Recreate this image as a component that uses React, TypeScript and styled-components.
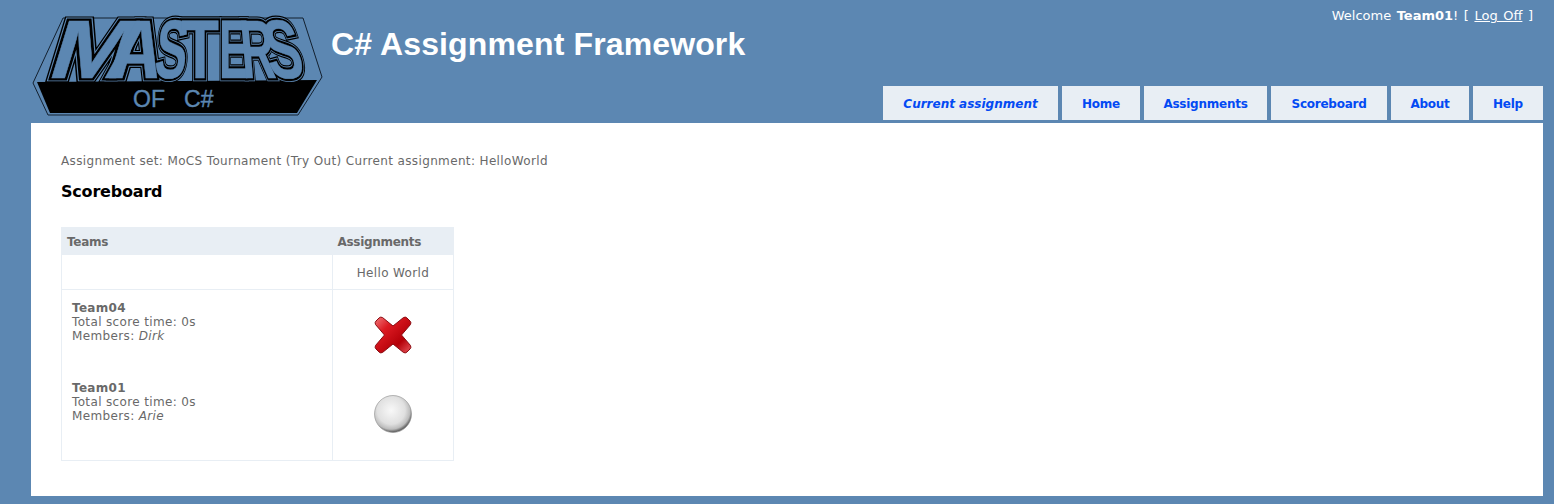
import styled, { createGlobalStyle } from "styled-components";

const GlobalStyle = createGlobalStyle`
  html, body {
    margin: 0;
    padding: 0;
    background-color: #5c87b2;
  }
  body {
    font-family: "DejaVu Sans", Verdana, sans-serif;
    font-size: 12px;
    letter-spacing: 0.36px;
    color: #696969;
  }
`;

const Page = styled.div`
  width: 1554px;
  height: 504px;
  overflow: hidden;
  display: flex;
  flex-direction: column;
  padding: 0 11px 8px 31px;
  box-sizing: border-box;
`;

const Header = styled.header`
  height: 123px;
  display: flex;
  position: relative;
`;

const LogoBox = styled.div`
  width: 300px;
  height: 123px;
  flex: none;
`;

const Title = styled.h1`
  margin: 24px 0 0 0;
  font-family: "Liberation Sans", Arial, sans-serif;
  font-size: 32px;
  line-height: 40px;
  font-weight: bold;
  letter-spacing: 0.13px;
  color: #fff;
`;

const Login = styled.div`
  position: absolute;
  top: 8px;
  right: 10px;
  font-size: 13px;
  line-height: 15px;
  letter-spacing: 0;
  word-spacing: 1.4px;
  color: #fff;
  white-space: pre;

  a {
    color: #fff;
    text-decoration: underline;
  }
`;

const Menu = styled.nav`
  position: absolute;
  right: 0;
  bottom: 3px;
  display: flex;
  gap: 4px;
`;

const Tab = styled.a<{ $width: number; $current?: boolean }>`
  width: ${({ $width }) => $width}px;
  height: 34px;
  padding-top: 2px;
  box-sizing: border-box;
  display: flex;
  align-items: center;
  justify-content: center;
  background-color: #e8eef4;
  color: #034af3;
  font-size: 12px;
  font-weight: bold;
  letter-spacing: ${({ $current }) => ($current ? "0" : "-0.25px")};
  font-style: ${({ $current }) => ($current ? "italic" : "normal")};
`;

const Main = styled.main`
  flex: 1;
  background-color: #fff;
  padding: 31px 30px 0 30px;
`;

const Breadcrumb = styled.div`
  font-size: 12px;
  line-height: 15px;
`;

const Heading = styled.h2`
  margin: 13px 0 0 0;
  font-family: "DejaVu Sans", Verdana, sans-serif;
  font-size: 16px;
  line-height: 20px;
  font-weight: bold;
  letter-spacing: -0.2px;
  color: #000;
`;

const Table = styled.table`
  margin-top: 25px;
  width: 392px;
  border-collapse: collapse;
  border: 1px solid #e8eef4;
  table-layout: fixed;
`;

const HeadCell = styled.th<{ $width: number }>`
  width: ${({ $width }) => $width}px;
  height: 27px;
  padding: 2px 5px 0 5px;
  background-color: #e8eef4;
  text-align: left;
  font-size: 12px;
  font-weight: bold;
  letter-spacing: -0.3px;
  box-sizing: border-box;
`;

const TitleRow = styled.tr`
  border-bottom: 1px solid #e8eef4;
`;

const Cell = styled.td`
  height: 35px;
  padding: 2px 0 0 0;
  box-sizing: border-box;
  border-left: 1px solid #e8eef4;
  text-align: center;
  vertical-align: middle;
`;

const TeamCell = styled.td<{ $height: number }>`
  height: ${({ $height }) => $height}px;
  padding: 11px 10px 0 10px;
  box-sizing: border-box;
  vertical-align: top;
  line-height: 14px;
`;

const TeamName = styled.div`
  font-weight: bold;
  letter-spacing: 0.3px;
`;

const StatusCell = styled.td`
  padding: 0;
  border-left: 1px solid #e8eef4;
  text-align: center;
  vertical-align: top;
`;

const StatusIcon = styled.svg<{ $top: number }>`
  display: block;
  margin: ${({ $top }) => $top}px auto 0 auto;
`;

const LOGO_LETTERS = [
  { ch: "M", x: 14, w: 84, skew: -17 },
  { ch: "A", x: 72, w: 56, skew: -12 },
  { ch: "S", x: 122, w: 32, skew: -6 },
  { ch: "T", x: 150, w: 38, skew: 0 },
  { ch: "E", x: 188, w: 30, skew: 0 },
  { ch: "R", x: 212, w: 34, skew: 5 },
  { ch: "S", x: 240, w: 36, skew: 12 },
];

function Logo() {
  return (
    <svg width="300" height="123" viewBox="0 0 300 123">
      <defs>
        <g
          id="logoWord"
          fontFamily="'Liberation Sans', Arial, sans-serif"
          fontWeight="700"
          fontSize="83"
          letterSpacing="0"
        >
          {LOGO_LETTERS.map((l, i) => (
            <text
              key={i}
              transform={`translate(${l.x} 78) skewX(${l.skew})`}
              textLength={l.w}
              lengthAdjust="spacingAndGlyphs"
            >
              {l.ch}
            </text>
          ))}
        </g>
      </defs>
      <polygon
        points="2,83 32,18 272,18 291,77 267,115 17,115"
        fill="#5c87b2"
        stroke="#13202f"
        strokeWidth="1"
      />
      <polygon points="6,82 286,80 266,113 19,113" fill="#000" />
      <g strokeLinejoin="miter" strokeMiterlimit="3">
        <use href="#logoWord" fill="#000" stroke="#000" strokeWidth="9" />
        <use href="#logoWord" fill="#5c87b2" stroke="#5c87b2" strokeWidth="6.6" />
        <use href="#logoWord" fill="#000" stroke="#000" strokeWidth="4.8" />
        <use href="#logoWord" fill="#5c87b2" stroke="#5c87b2" strokeWidth="0.4" />
      </g>
      <text
        x="102"
        y="107"
        fontFamily="'Liberation Sans', Arial, sans-serif"
        fontSize="23"
        letterSpacing="0"
        fill="#5c87b2"
        stroke="#5c87b2"
        strokeWidth="0.4"
        xmlSpace="preserve"
      >
        OF   C#
      </text>
    </svg>
  );
}

function CrossIcon() {
  return (
    <StatusIcon $top={26} width="38" height="38" viewBox="0 0 38 38">
      <defs>
        <linearGradient id="crossFill" x1="0" y1="0" x2="1" y2="1">
          <stop offset="0" stopColor="#f0787a" />
          <stop offset="0.3" stopColor="#dc1a22" />
          <stop offset="0.7" stopColor="#b40008" />
          <stop offset="1" stopColor="#e8585e" />
        </linearGradient>
      </defs>
      <path
        d="M8.5 1.5 L19 10 L29.5 1.5 Q31.5 0.5 33 2 L36 5 Q37.5 6.5 36.5 8.5 L27.5 19 L36.5 29.5 Q37.5 31.5 36 33 L33 36 Q31.5 37.5 29.5 36.5 L19 28 L8.5 36.5 Q6.5 37.5 5 36 L2 33 Q0.5 31.5 1.5 29.5 L10.5 19 L1.5 8.5 Q0.5 6.5 2 5 L5 2 Q6.5 0.5 8.5 1.5 Z"
        fill="url(#crossFill)"
        stroke="#8a0a10"
        strokeWidth="1"
      />
    </StatusIcon>
  );
}

function BallIcon() {
  return (
    <StatusIcon $top={25} width="38" height="38" viewBox="0 0 38 38">
      <defs>
        <radialGradient id="ballFill" cx="0.45" cy="0.4" r="0.58">
          <stop offset="0" stopColor="#f8f8f8" />
          <stop offset="0.65" stopColor="#e0e0e0" />
          <stop offset="0.88" stopColor="#bcbcbc" />
          <stop offset="1" stopColor="#6a6a6a" />
        </radialGradient>
      </defs>
      <circle cx="19" cy="19" r="18.5" fill="url(#ballFill)" stroke="#8c8c8c" strokeWidth="0.6" />
    </StatusIcon>
  );
}

export default function App() {
  return (
    <>
      <GlobalStyle />
      <Page>
        <Header>
          <LogoBox>
            <Logo />
          </LogoBox>
          <Title>C# Assignment Framework</Title>
          <Login>
            Welcome <b>Team01</b>! [ <a href="#">Log Off</a> ]
          </Login>
          <Menu>
            <Tab $width={175} $current>Current assignment</Tab>
            <Tab $width={78}>Home</Tab>
            <Tab $width={123}>Assignments</Tab>
            <Tab $width={116}>Scoreboard</Tab>
            <Tab $width={78}>About</Tab>
            <Tab $width={70}>Help</Tab>
          </Menu>
        </Header>
        <Main>
          <Breadcrumb>Assignment set: MoCS Tournament (Try Out) Current assignment: HelloWorld</Breadcrumb>
          <Heading>Scoreboard</Heading>
          <Table>
            <thead>
              <tr>
                <HeadCell $width={271}>Teams</HeadCell>
                <HeadCell $width={121}>Assignments</HeadCell>
              </tr>
            </thead>
            <tbody>
              <TitleRow>
                <td />
                <Cell>Hello World</Cell>
              </TitleRow>
              <tr>
                <TeamCell $height={80}>
                  <TeamName>Team04</TeamName>
                  Total score time: 0s
                  <br />
                  Members: <i>Dirk</i>
                </TeamCell>
                <StatusCell>
                  <CrossIcon />
                </StatusCell>
              </tr>
              <tr>
                <TeamCell $height={91}>
                  <TeamName>Team01</TeamName>
                  Total score time: 0s
                  <br />
                  Members: <i>Arie</i>
                </TeamCell>
                <StatusCell>
                  <BallIcon />
                </StatusCell>
              </tr>
            </tbody>
          </Table>
        </Main>
      </Page>
    </>
  );
}
